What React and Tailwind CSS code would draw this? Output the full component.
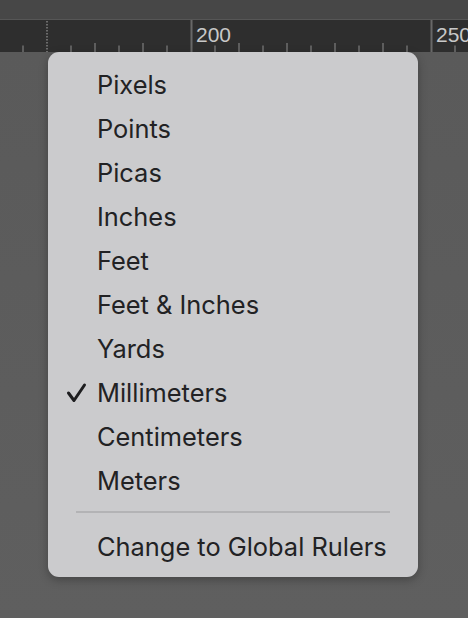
import React from "react";

const units = ["Pixels", "Points", "Picas", "Inches", "Feet", "Feet & Inches", "Yards", "Millimeters", "Centimeters", "Meters"];

function Ruler() {
  const ticks = [];
  for (let x = 23; x < 468; x += 24) {
    const k = Math.round((x - 191) / 24);
    if (k % 10 === 0) continue;
    if (x === 47) continue;
    const tall = k % 2 === 0;
    ticks.push(<rect key={x} x={x - 1} y={tall ? 23 : 25.5} width="2" height={tall ? 9 : 6.5} fill="#5e5e5e" />);
  }
  return (
    <svg width="468" height="32" className="block">
      <rect x="0" y="0" width="468" height="32" fill="#2e2e2e" />
      {ticks}
      <rect x="190.5" y="0" width="2" height="32" fill="#686868" />
      <rect x="430.5" y="0" width="2" height="32" fill="#686868" />
      <line x1="47" y1="1" x2="47" y2="32" stroke="#6c6c6c" strokeWidth="2" strokeDasharray="1.5 1.5" />
      <text x="196" y="22" fill="#c8c8c8" fontSize="21" fontFamily="'Liberation Sans', Arial, sans-serif">200</text>
      <text x="436" y="22" fill="#c8c8c8" fontSize="21" fontFamily="'Liberation Sans', Arial, sans-serif">250</text>
    </svg>
  );
}

function Check() {
  return (
    <svg width="24" height="24" viewBox="0 0 24 24" className="absolute left-[17px] top-[11px]">
      <path d="M3.5 11 L9 18.5 L19.5 3" fill="none" stroke="#1d1d1f" strokeWidth="3" strokeLinecap="round" strokeLinejoin="round" />
    </svg>
  );
}

export default function App() {
  return (
    <div className="w-[468px] h-[618px] overflow-hidden bg-[#5d5d5d] flex flex-col font-['Inter',sans-serif]">
      <div className="h-[19px] bg-[#474747]" />
      <div className="h-px bg-[#565656]" />
      <Ruler />
      <div className="relative flex-1 bg-gradient-to-b from-[#5a5a5a] to-[#5f5f5f]">
        <div className="absolute left-[48px] top-0 w-[370px] h-[525px] rounded-[11px] bg-[#cbcbcd] shadow-[0_3px_10px_rgba(0,0,0,0.28)] pt-[11px] pb-[8px] flex flex-col">
          {units.map((u) => (
            <div key={u} className="relative h-[44px] pl-[49px] flex items-center text-[25.4px] text-[#222224]">
              {u === "Millimeters" && <Check />}
              <span>{u}</span>
            </div>
          ))}
          <div className="h-[22px] pt-[8px] px-[28px]">
            <div className="h-[2px] w-full bg-[#b3b3b5]" />
          </div>
          <div className="h-[44px] pl-[49px] flex items-center text-[25.4px] text-[#222224]">
            Change to Global Rulers
          </div>
        </div>
      </div>
    </div>
  );
}
